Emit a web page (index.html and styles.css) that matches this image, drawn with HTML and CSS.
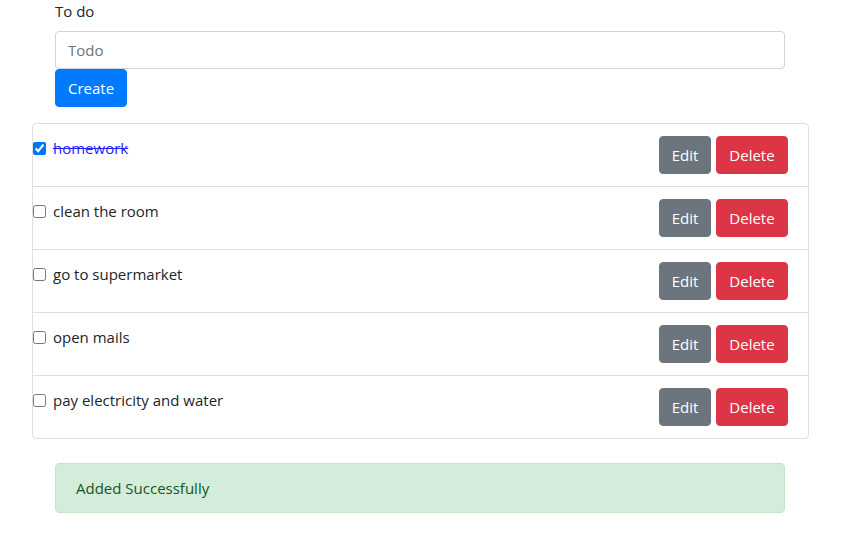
FILE: index.html
```html
<!DOCTYPE html>
<html>
<head>
<meta charset="utf-8">
<link rel="stylesheet" href="styles.css">
</head>
<body>
<div class="page">
  <form class="todo-form">
    <label class="form-label" for="todo">To do</label>
    <input id="todo" class="form-input" type="text" placeholder="Todo">
    <button type="button" class="btn btn-primary">Create</button>
  </form>
  <ul class="list">
    <li class="list-item">
      <label class="item-label done"><input type="checkbox" class="check" checked><span>homework</span></label>
      <div class="actions"><button class="btn btn-secondary btn-edit">Edit</button><button class="btn btn-danger btn-delete">Delete</button></div>
    </li>
    <li class="list-item">
      <label class="item-label"><input type="checkbox" class="check"><span>clean the room</span></label>
      <div class="actions"><button class="btn btn-secondary btn-edit">Edit</button><button class="btn btn-danger btn-delete">Delete</button></div>
    </li>
    <li class="list-item">
      <label class="item-label"><input type="checkbox" class="check"><span>go to supermarket</span></label>
      <div class="actions"><button class="btn btn-secondary btn-edit">Edit</button><button class="btn btn-danger btn-delete">Delete</button></div>
    </li>
    <li class="list-item">
      <label class="item-label"><input type="checkbox" class="check"><span>open mails</span></label>
      <div class="actions"><button class="btn btn-secondary btn-edit">Edit</button><button class="btn btn-danger btn-delete">Delete</button></div>
    </li>
    <li class="list-item">
      <label class="item-label"><input type="checkbox" class="check"><span>pay electricity and water</span></label>
      <div class="actions"><button class="btn btn-secondary btn-edit">Edit</button><button class="btn btn-danger btn-delete">Delete</button></div>
    </li>
  </ul>
  <div class="alert">Added Successfully</div>
</div>
</body>
</html>
```
FILE: styles.css
```css
* { box-sizing: border-box; }
html, body { margin: 0; padding: 0; background: #fff; }
body {
  font-family: "Open Sans", "Noto Sans", sans-serif;
  font-size: 15px;
  line-height: 24px;
  color: #212529;
}
.page {
  width: 777px;
  margin-left: 32px;
}
.todo-form {
  margin: 0 24px 0 23px;
  display: flex;
  flex-direction: column;
  align-items: flex-start;
}
.form-label {
  display: block;
  margin-top: -1px;
  margin-bottom: 8px;
}
.form-input {
  display: block;
  width: 100%;
  height: 38px;
  padding: 6px 12px;
  font: inherit;
  color: #495057;
  border: 1px solid #ced4da;
  border-radius: 4px;
  outline: none;
}
.form-input::placeholder { color: #6c757d; }
.btn {
  display: inline-block;
  height: 38px;
  padding: 6px 12px;
  font: inherit;
  line-height: 24px;
  text-align: center;
  color: #fff;
  border: 1px solid transparent;
  border-radius: 4px;
  cursor: pointer;
}
.btn-primary { background: #007bff; border-color: #007bff; }
.btn-secondary { background: #6c757d; border-color: #6c757d; }
.btn-danger { background: #dc3545; border-color: #dc3545; }
.btn-edit { width: 52px; padding: 6px 0; }
.btn-delete { width: 72px; padding: 6px 0; }
.list {
  list-style: none;
  margin: 16px 0 0;
  padding: 0;
  border: 1px solid #dfdfdf;
  border-radius: 4px;
}
.list-item {
  display: flex;
  justify-content: space-between;
  align-items: flex-start;
  padding: 12px 20px 12px 0;
  border-top: 1px solid #dfdfdf;
}
.list-item:first-child { border-top: none; }
.item-label {
  display: flex;
  align-items: center;
  height: 24px;
}
.check {
  width: 13px;
  height: 13px;
  margin: 0 7px 0 0;
}
.done span {
  color: #2323ff;
  text-decoration: line-through;
}
.actions {
  display: flex;
  gap: 5px;
}
.alert {
  margin: 24px 24px 0 23px;
  padding: 12px 20px;
  color: #155724;
  background: #d4edda;
  border: 1px solid #c3e6cb;
  border-radius: 4px;
}
```
